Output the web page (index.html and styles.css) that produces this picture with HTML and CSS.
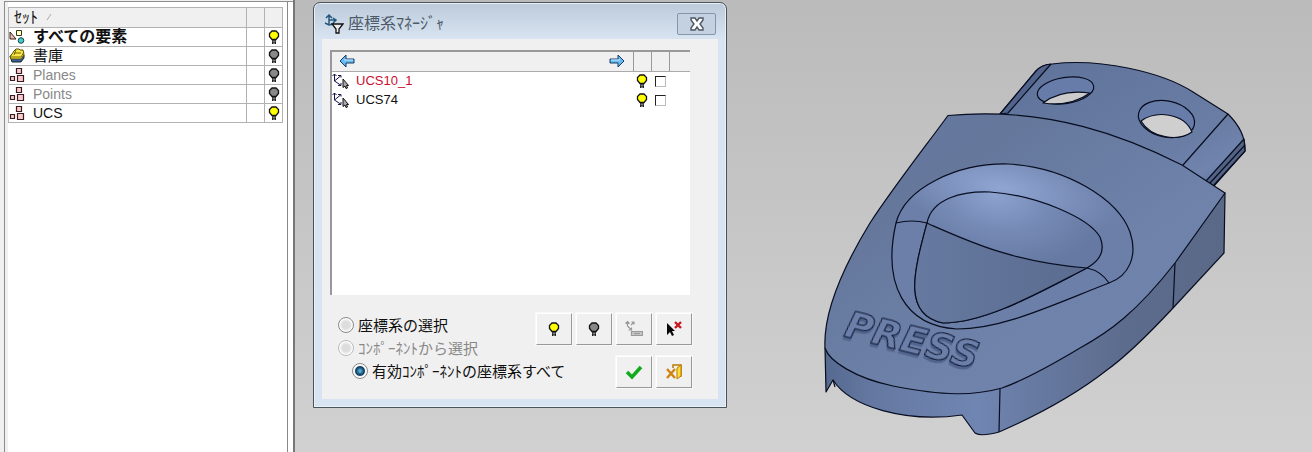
FILE: index.html
```html
<!DOCTYPE html>
<html lang="ja">
<head>
<meta charset="utf-8">
<meta name="viewport" content="width=device-width, initial-scale=1">
<title>座標系ﾏﾈｰｼﾞｬ</title>
<link rel="stylesheet" href="styles.css">
</head>
<body>
<svg class="defs" aria-hidden="true">
  <symbol id="bulb" viewBox="0 0 12 15">
    <path d="M4 9.500V14h4V9.500" fill="#222"/>
    <path d="M4 1h4l2.500 2.500v3L8 9.500H4L1.500 6.500v-3z" fill="currentColor" stroke="#111" stroke-width="1.300"/>
    <path d="M4.500 11.200h3M5 13.200h2" stroke="#ddd" stroke-width=".7"/>
  </symbol>
  <symbol id="boxes" viewBox="0 0 16 16">
    <g fill="#f8cccc" stroke="#3a1a20" stroke-width="1.200"><path d="M7.500 1.500h5v5h-5zM1.500 9.500h4v4h-4zM8.500 8.500h6v6h-6z"/></g>
  </symbol>
  <symbol id="axes" viewBox="0 0 18 18">
    <g fill="none" stroke="#15154d"><path d="M.5 4l2-2 2 2M2.500 2v7l6 4M2.500 9l6-5M6 3.500h3v2M6 13.500h3v-2.500"/></g>
    <path d="M11 7v8.500l2-1.500 1 2.500 1.500-.5-1-2.500h2z" fill="#aaa" stroke="#111"/>
  </symbol>
</svg>
<main class="app">
  <aside class="sidebar">
    <div class="pane">
      <table class="sets">
        <colgroup><col><col class="narrow"><col class="narrow"></colgroup>
        <thead><tr><th scope="col">ｾｯﾄ<svg class="sort" viewBox="0 0 6 8"><path d="M1 7l4-6" stroke="#aaa"/></svg></th><th></th><th></th></tr></thead>
        <tbody>
          <tr><td><span class="cell strong"><svg class="ico" viewBox="0 0 16 16"><path d="M1 3v7h6z" fill="#eebcbc" stroke="#321"/><path d="M7.500 1.500h5v5h-5z" fill="#ffffc0" stroke="#332"/><circle cx="12" cy="11.500" r="2.800" fill="#4cc" stroke="#144"/></svg>すべての要素</span></td><td></td><td><svg class="bulb on"><use href="#bulb"/></svg></td></tr>
          <tr><td><span class="cell jp"><svg class="ico" viewBox="0 0 16 16"><path d="M1 8l2 6h9l3-4V7z" fill="#345fa0" stroke="#222"/><path d="M1 9l4-6 2-2h3l1 1h3l1 5-3 4H2z" fill="#fae84a" stroke="#564d00"/><path d="M2 9h10l3-5M5 5h7M7 2l-2 5" fill="none" stroke="#766600"/></svg>書庫</span></td><td></td><td><svg class="bulb off"><use href="#bulb"/></svg></td></tr>
          <tr><td><span class="cell dim"><svg class="ico"><use href="#boxes"/></svg>Planes</span></td><td></td><td><svg class="bulb off"><use href="#bulb"/></svg></td></tr>
          <tr><td><span class="cell dim"><svg class="ico"><use href="#boxes"/></svg>Points</span></td><td></td><td><svg class="bulb off"><use href="#bulb"/></svg></td></tr>
          <tr><td><span class="cell"><svg class="ico"><use href="#boxes"/></svg>UCS</span></td><td></td><td><svg class="bulb on"><use href="#bulb"/></svg></td></tr>
        </tbody>
      </table>
    </div>
  </aside>
  <section class="workspace">
    <section class="dialog" role="dialog" aria-labelledby="dialog-title">
      <header class="titlebar">
        <svg class="title-icon" viewBox="0 0 20 20"><path d="M2 4l3-3 3 3M5 1v9M5 6h6M9 4l3 2-3 3M1 9l4 2 5-1" fill="none" stroke="#25577e" stroke-width="1.500"/><path d="M8 10h11l-4 5v4h-3v-4z" fill="#eee" stroke="#111" stroke-width="1.300"/></svg>
        <h1 id="dialog-title">座標系ﾏﾈｰｼﾞｬ</h1>
        <button class="close" type="button" aria-label="閉じる"><svg viewBox="0 0 16 14"><path d="M2 1h4l2 3 2-3h4v2l-3 4 3 4v2h-4l-2-3-2 3H2v-2l3-4-3-4z" fill="#fff" stroke="#4b5764" stroke-width="1.400"/></svg></button>
      </header>
      <div class="content">
        <div class="list">
          <table class="ucs">
            <colgroup><col><col class="check"><col class="check"><col class="rest"></colgroup>
            <thead><tr><th><span class="arrows">
              <button type="button" aria-label="前へ"><svg viewBox="0 0 16 14"><path d="M1 7l6-6v4h8v4H7v4z" fill="#65b9f4" stroke="#163b66"/><path d="M5 6h9" stroke="#c8ecff"/></svg></button>
              <button type="button" aria-label="次へ"><svg viewBox="0 0 16 14"><path d="M15 7L9 1v4H1v4h8v4z" fill="#65b9f4" stroke="#163b66"/><path d="M2 6h9" stroke="#c8ecff"/></svg></button>
            </span></th><th></th><th></th><th></th></tr></thead>
            <tbody>
              <tr><td><label class="name active" for="ucs10"><svg class="axis"><use href="#axes"/></svg>UCS10_1</label></td><td><svg class="bulb on"><use href="#bulb"/></svg></td><td><input id="ucs10" type="checkbox"></td><td></td></tr>
              <tr><td><label class="name" for="ucs74"><svg class="axis"><use href="#axes"/></svg>UCS74</label></td><td><svg class="bulb on"><use href="#bulb"/></svg></td><td><input id="ucs74" type="checkbox"></td><td></td></tr>
            </tbody>
          </table>
        </div>
        <form class="controls">
          <div class="options">
            <label><input type="radio" name="scope">座標系の選択</label>
            <label class="dim"><input type="radio" name="scope" disabled>ｺﾝﾎﾟｰﾈﾝﾄから選択</label>
            <label class="nested"><input type="radio" name="scope" checked>有効ｺﾝﾎﾟｰﾈﾝﾄの座標系すべて</label>
          </div>
          <div class="actions">
            <div class="tools">
              <button type="button" aria-label="表示"><svg class="bulb on"><use href="#bulb"/></svg></button>
              <button type="button" aria-label="非表示"><svg class="bulb off"><use href="#bulb"/></svg></button>
              <button type="button" aria-label="名前変更"><svg class="tool" viewBox="0 0 18 18"><g fill="none" stroke="#999" stroke-width="1.200"><path d="M.5 3.500l2-2 2 2M2.500 1.500V6l4 4M3.500 10h3V7.500M6 5l3-3M6.500 2H9v2.500"/><path d="M6.500 11.500h11v4h-11z" fill="#c8c8c8"/><path d="M9 13.500h6"/></g></svg></button>
              <button type="button" aria-label="選択解除"><svg class="tool" viewBox="0 0 18 18"><path d="M2 3v12l3-3 2 4 2-1-2-4h3z" fill="#080808"/><path d="M10 2l6 6M16 2l-6 6" stroke="#c81822" stroke-width="2.400"/></svg></button>
            </div>
            <div class="tools">
              <button type="submit" aria-label="OK"><svg class="tool" viewBox="0 0 18 18"><path d="M2 9l5 5 9-10" fill="none" stroke="#12aa1d" stroke-width="3.500"/></svg></button>
              <button type="button" aria-label="終了"><svg class="tool" viewBox="0 0 18 18"><path d="M8 5V2h8v11h-3" fill="none" stroke="#b77b00" stroke-width="1.500"/><path d="M16 2l-4 3v11l4-3z" fill="#ffdc36" stroke="#b77b00"/><path d="M2 6l8 9M10 6l-8 9" stroke="#d18311" stroke-width="2.400"/></svg></button>
            </div>
          </div>
        </form>
      </div>
    </section>
    <svg class="model" viewBox="727 0 585 452" preserveAspectRatio="xMinYMin meet" role="img" aria-label="PRESS">
      <defs>
        <linearGradient id="face" x1="0" y1="0" x2="1" y2="1"><stop offset="0" stop-color="#6478a0"/><stop offset=".25" stop-color="#65779b"/><stop offset=".6" stop-color="#6e82aa"/><stop offset="1" stop-color="#7084ae"/></linearGradient>
        <linearGradient id="side" gradientUnits="userSpaceOnUse" x1="825" y1="0" x2="1225" y2="0"><stop offset="0" stop-color="#56698f"/><stop offset=".12" stop-color="#6478a1"/><stop offset=".38" stop-color="#7086b2"/><stop offset=".5" stop-color="#687ba3"/><stop offset=".75" stop-color="#5c6c8d"/><stop offset="1" stop-color="#5b6988"/></linearGradient>
        <linearGradient id="tab" x1="0" y1="0" x2="1" y2="1"><stop offset="0" stop-color="#5f7299"/><stop offset=".7" stop-color="#6a7da5"/><stop offset=".85" stop-color="#7084ae"/><stop offset="1" stop-color="#5a6a8e"/></linearGradient>
        <radialGradient id="rim" gradientUnits="userSpaceOnUse" cx="0" cy="0" r="1" gradientTransform="translate(1003 188) rotate(10) scale(120 46)"><stop offset="0" stop-color="#90a5d2"/><stop offset="1" stop-color="#6b7fa9"/></radialGradient>
        <radialGradient id="bowl" gradientUnits="userSpaceOnUse" cx="0" cy="0" r="1" gradientTransform="translate(995 194) rotate(12) scale(110 70)"><stop offset="0" stop-color="#8da2ce"/><stop offset=".5" stop-color="#758ab5"/><stop offset="1" stop-color="#6579a2"/></radialGradient>
        <linearGradient id="slope" x1="0" y1="0" x2="1" y2="0"><stop offset="0" stop-color="#6679a0"/><stop offset=".5" stop-color="#607297"/><stop offset="1" stop-color="#5b6c90"/></linearGradient>
      </defs>
      <g class="edges">
        <path fill="url(#tab)" d="M1000 114L1036 71Q1041 65 1052 64C1100 58 1162 72 1193 92L1228 114Q1246 132 1245 151L1213 187L1120 175z"/>
        <path fill="#52648b" d="M1000 114L1036 71Q1041 65 1051 64L1008 113z"/>
        <path fill="#536385" d="M1244 139L1206 181L1213 186L1245 151z"/>
        <path fill="none" d="M1228 114L1183 165M1245 145L1210 183"/>
        <ellipse cx="1065.500" cy="90.500" rx="28.500" ry="13" transform="rotate(-9 1065.500 90.500)" fill="#687ca9"/>
        <path fill="#cbcbcb" d="M1043 103Q1061 89 1090 93Q1070 107 1043 103z"/>
        <ellipse cx="1166.500" cy="119" rx="28.500" ry="18" transform="rotate(12 1166.500 119)" fill="#687ca9"/>
        <path fill="#cfcfcf" d="M1141 121C1156 110 1184 113 1192 132C1178 142 1151 138 1141 121z"/>
        <path fill="url(#side)" d="M825 348L826 392L833 380C850 407 906 423 962 415L975 433Q981 437 999 432C1038 415 1075 395 1107 370Q1132 352 1173 308L1224 253L1225 193L1000 330z"/>
        <path fill="url(#face)" d="M948 115.500C1050 106 1129 138 1182 165L1225 193L1175 263C1136 313 1109 332 1080 348Q1030 378 1002 388C973 396 944 396 893 386C855 378 829 361 825 348C823 310 845 264 870 223C895 185 925 147 948 115.500z"/>
        <path fill="none" d="M1000 389L999 432M1175 263L1173 308M833 380L835 387"/>
        <path fill="url(#rim)" d="M896 223C905 188 957 163 1008 164C1066 167 1118 199 1130 232C1138 256 1129 276 1109 283C1052 305 1003 329 957 329C905 326 882 285 896 223z"/>
        <path fill="url(#bowl)" d="M927 223C932 198 963 191 990 192C1037 195 1089 218 1100 237Q1108 256 1087 268C1038 293 986 323 943 323C901 315 915 268 927 223z"/>
        <path fill="url(#slope)" d="M929 224C970 242 1013 262 1087 268C1038 293 986 323 943 323C901 315 915 268 927 223z"/>
        <path fill="none" d="M896 223Q912 219 927 223M1087 268Q1101 271 1109 283"/>
      </g>
      <text class="emboss" transform="translate(843 336) rotate(14)">PRESS</text>
    </svg>
  </section>
</main>
</body>
</html>
```
FILE: styles.css
```css
* { box-sizing: border-box; }
body { margin: 0; font: 13px "Liberation Sans", "Noto Sans CJK JP", sans-serif; color: #111; }
button { font: inherit; padding: 0; }
.defs { position: absolute; width: 0; height: 0; }
.app { display: flex; min-height: 100vh; background: linear-gradient(#bbb, #d1d1d1); overflow: hidden; }

.sidebar { flex: 0 0 295px; display: flex; padding: 1px 0 0 4px; background: #f0f0f0; border-right: 2px solid #777; }
.pane { flex: 1; padding: 5px 0 0 3px; border: solid #8c8c8c; border-width: 1px 0 0 1px; background: linear-gradient(90deg, #f0f0f0 3px, #fff 3px, #fff 282px, #888 282px, #888 283px, #fff 283px); }
table { width: 100%; border-collapse: collapse; table-layout: fixed; }
th, td { padding: 0; height: 19px; text-align: left; font-weight: 400; line-height: 18px; }
.sets { width: 275px; border: 1px solid #999; border-bottom: 0; }
.sets th { height: 20px; padding-left: 5px; background: #f0f0f0; font-size: 16px; }
.sets th, .sets td { border: 1px solid #b2b2b2; }
.narrow, .check { width: 18px; }
.sort { width: 6px; height: 8px; margin: 0 0 2px 8px; }
.cell { display: flex; align-items: center; gap: 8px; height: 18px; font-size: 14px; white-space: nowrap; }
.cell.strong { font-size: 16px; font-weight: 700; }
.cell.jp { font-size: 15px; }
.dim { color: #888; }
.ico { flex: none; width: 16px; height: 16px; }
.bulb { display: block; width: 12px; height: 15px; margin: 0 auto; }
.on { color: #ff0; }
.off { color: #888; }

.workspace { flex: 1; min-width: 0; display: flex; align-items: flex-start; padding-left: 18px; }
.dialog { flex: 0 0 414px; margin-top: 2px; padding: 0 8px 8px; border: 1px solid #4a525a; border-radius: 7px 7px 0 0; background: linear-gradient(#bccada, #d8e4f1 36px, #d8e4f1); box-shadow: inset 0 0 0 1px #e8f0f8; }
.titlebar { display: flex; align-items: center; height: 36px; padding: 6px 2px 0; }
.title-icon { width: 20px; height: 20px; margin-right: 4px; }
h1 { flex: 1; margin: 0; font-size: 16px; line-height: 24px; font-weight: 400; color: #4d5a68; }
.close { display: grid; place-items: center; width: 39px; height: 22px; border: 1px solid #8595ac; border-radius: 2px; background: #c4d1e0; }
.close svg { width: 16px; height: 14px; }
.content { padding: 11px 28px 11px 8px; background: #f0f0f0; }
.list { min-height: 245px; border: solid #999; border-width: 2px 0 0 2px; background: #fff; }
.ucs th { background: #f0f0f0; border-bottom: 1px solid #aaa; }
.ucs th + th { border-left: 1px solid #999; }
.rest { width: 21px; }
.arrows { display: flex; justify-content: space-between; padding: 0 8px 0 7px; }
.arrows button { display: flex; border: 0; background: none; }
.arrows svg { width: 16px; height: 14px; }
.name { display: flex; align-items: center; gap: 6px; height: 19px; }
.axis { width: 18px; height: 18px; }
.active { color: #c8102e; }
.ucs input { display: block; appearance: none; width: 11px; height: 11px; margin: 0 auto; border: 1px solid; border-color: #222 #bbb #bbb #222; background: #fff; }
.controls { display: flex; justify-content: space-between; padding-top: 18px; margin-right: -2px; }
.options { display: flex; flex-direction: column; padding-left: 8px; }
.options label { display: flex; align-items: center; gap: 4px; height: 23px; font-size: 15px; white-space: nowrap; }
.options .nested { padding-left: 14px; }
.options input { flex: none; appearance: none; width: 16px; height: 16px; margin: 0; border: 1px solid #8a8a8a; border-radius: 50%; background: radial-gradient(#ddd 35%, #fafafa 70%); box-shadow: inset 0 0 0 1px #fff; }
.options input:disabled { border-color: #bbb; }
.options input:checked { background: radial-gradient(#5ec8ec, #123f66 40%, #123f66 45%, #f4f4f4 55%); }
.actions { display: flex; flex-direction: column; align-items: flex-end; gap: 11px; margin-left: -40px; }
.tools { display: flex; gap: 4px; }
.tools button { display: grid; place-items: center; width: 36px; height: 32px; border: 1px solid; border-color: #fff #999 #999 #fff; background: #f0f0f0; box-shadow: 0 0 0 1px #f8f8f8; }
.tool { width: 18px; height: 18px; }

.model { flex: 1; min-width: 0; align-self: stretch; }
.edges { stroke: #080d20; stroke-width: 1.2; stroke-linejoin: round; }
.emboss { font: italic 700 38px "DejaVu Sans", sans-serif; fill: #6b7fa8; stroke: #0c1430; stroke-width: 1; filter: drop-shadow(0 3px 0 #51648c); }
```
